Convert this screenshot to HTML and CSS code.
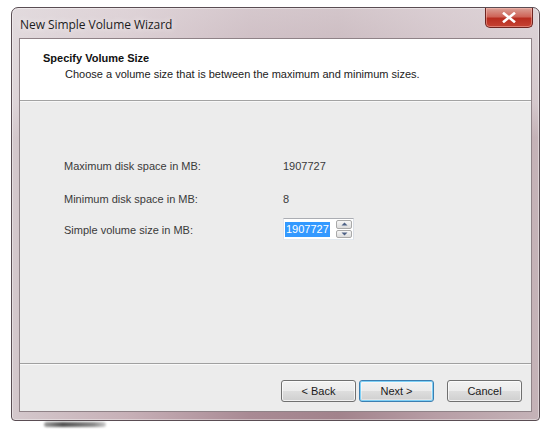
FILE: index.html
```html
<!DOCTYPE html>
<html>
<head>
<meta charset="utf-8">
<link rel="stylesheet" href="styles.css">
</head>
<body>
<div class="window">
  <div class="titlebar">
    <span class="title">New Simple Volume Wizard</span>
    <button class="close" aria-label="Close">
      <svg width="14" height="11" viewBox="0 0 14 11"><path d="M2 1.5 L12 9.5 M12 1.5 L2 9.5" stroke="#ffffff" stroke-width="2.6" stroke-linecap="square" fill="none"/></svg>
    </button>
  </div>
  <div class="client">
    <div class="header">
      <div class="h-title">Specify Volume Size</div>
      <div class="h-sub">Choose a volume size that is between the maximum and minimum sizes.</div>
    </div>
    <div class="content">
      <div class="grid">
        <div class="label">Maximum disk space in MB:</div>
        <div class="value">1907727</div>
        <div class="label">Minimum disk space in MB:</div>
        <div class="value">8</div>
        <div class="label">Simple volume size in MB:</div>
        <div class="value">
          <div class="spinner">
            <div class="spin-input"><span class="sel">1907727</span></div>
            <div class="spin-btns">
              <div class="spin-btn"><svg width="7" height="4" viewBox="0 0 7 4"><path d="M0.5 3.5 L3.5 0.5 L6.5 3.5 Z" fill="#4d6185"/></svg></div>
              <div class="spin-btn"><svg width="7" height="4" viewBox="0 0 7 4"><path d="M0.5 0.5 L3.5 3.5 L6.5 0.5 Z" fill="#4d6185"/></svg></div>
            </div>
          </div>
        </div>
      </div>
    </div>
    <div class="footer">
      <button class="btn">&lt; Back</button>
      <button class="btn default">Next &gt;</button>
      <button class="btn cancel">Cancel</button>
    </div>
  </div>
</div>
<div class="under"><div class="smudge"></div></div>
</body>
</html>
```

FILE: styles.css
```css
html, body {
  margin: 0;
  padding: 0;
  background: #ffffff;
  overflow: hidden;
}

body {
  width: 544px;
  height: 429px;
  font-family: "Liberation Sans", Arial, sans-serif;
}

.window {
  margin: 7px 0 0 11px;
  width: 529px;
  height: 414px;
  box-sizing: border-box;
  border: 1px solid #5a4d53;
  border-radius: 7px 7px 4px 4px;
  display: flex;
  flex-direction: column;
  background:
    linear-gradient(to bottom, rgba(232,226,229,0.7) 0px, rgba(232,226,229,0.45) 95px, rgba(232,226,229,0) 130px),
    linear-gradient(to right, #d4c8cc 0%, #c7b0b7 22%, #a98a94 45%, #a2838c 62%, #b79da5 80%, #c5b3b8 100%);
  box-shadow: inset 0 0 0 1px rgba(255,255,255,0.4);
}

.titlebar {
  height: 30px;
  flex: none;
  display: flex;
  align-items: flex-start;
  padding: 0 6px 0 8px;
}

.title {
  margin-top: 8px;
  font-family: "Open Sans", "Noto Sans", sans-serif;
  font-size: 12px;
  color: #1c1c1c;
  letter-spacing: -0.05px;
  text-shadow: 0 0 6px rgba(255,255,255,0.9);
}

.close {
  margin-left: auto;
  margin-top: 0;
  width: 48px;
  height: 20px;
  padding: 0;
  border: 1px solid #6e2420;
  border-top: none;
  border-radius: 0 0 5px 5px;
  background: linear-gradient(to bottom, #dba096 0%, #cf6559 45%, #b82d20 55%, #c54333 100%);
  box-shadow: inset 0 0 0 1px rgba(255,200,190,0.45);
  display: flex;
  align-items: center;
  justify-content: center;
}

.client {
  flex: 1;
  margin: 0 7px 8px 7px;
  border: 1px solid #8f8287;
  background: #ececec;
  display: flex;
  flex-direction: column;
}

.header {
  flex: none;
  background: #ffffff;
  border-bottom: 1px solid #a3a3a3;
  box-sizing: border-box;
  height: 62px;
  padding: 12px 0 0 23px;
  color: #111;
}

.h-title {
  font-size: 11px;
  font-weight: bold;
  line-height: 14px;
}

.h-sub {
  font-size: 11px;
  line-height: 14px;
  padding-left: 22px;
  margin-top: 2px;
  color: #222;
}

.content {
  flex: 1;
  border-top: 1px solid #f8f8f8;
  padding: 57px 0 0 44px;
}

.grid {
  display: grid;
  grid-template-columns: 219px auto;
  grid-template-rows: 33px 31px auto;
  font-size: 11px;
  color: #3a3a3a;
}

.grid .label,
.grid .value {
  line-height: 14px;
}

.spinner {
  display: flex;
  margin-top: -5px;
  width: 71px;
  height: 22px;
  box-sizing: border-box;
  border: 1px solid #abadb3;
  border-left-color: #e2e3ea;
  border-right-color: #dbdfe6;
  border-bottom-color: #e3e9ef;
  background: #ffffff;
}

.spin-input {
  flex: 1;
  padding: 3px 0 0 1px;
}

.sel {
  display: inline-block;
  background: #3399ff;
  color: #ffffff;
  line-height: 15px;
  padding: 0 1px;
}

.spin-btns {
  width: 16px;
  display: flex;
  flex-direction: column;
  gap: 1px;
  padding: 1px 1px 1px 0;
}

.spin-btn {
  flex: 1;
  border: 1px solid #a9a9a9;
  border-radius: 2px;
  background: linear-gradient(to bottom, #f6f6f6, #dcdcdc);
  display: flex;
  align-items: center;
  justify-content: center;
}

.footer {
  height: 48px;
  flex: none;
  box-sizing: border-box;
  border-top: 1px solid #a0a0a0;
  box-shadow: inset 0 1px 0 #f9f9f9;
  display: flex;
  align-items: flex-start;
  padding: 16px 9px 0 0;
  justify-content: flex-end;
  gap: 3px;
}

.btn {
  width: 75px;
  height: 22px;
  padding: 0;
  font-family: "Liberation Sans", Arial, sans-serif;
  font-size: 11px;
  color: #1a1a1a;
  border: 1px solid #707070;
  border-radius: 3px;
  background: linear-gradient(to bottom, #f2f2f2 0%, #ebebeb 50%, #dddddd 51%, #cfcfcf 100%);
  box-shadow: inset 0 0 0 1px rgba(255,255,255,0.7);
}

.btn.default {
  border-color: #3c7fb1;
  box-shadow: inset 0 0 0 1px #7fd0f6, inset 0 0 0 2px rgba(255,255,255,0.4);
}

.btn.cancel {
  margin-left: 10px;
}

.under {
  padding: 1px 0 0 44px;
}

.smudge {
  width: 62px;
  height: 5px;
  border-radius: 3px;
  background: linear-gradient(to right, rgba(60,60,60,0.5), rgba(40,40,40,0.8) 30%, rgba(60,60,60,0.6) 80%, rgba(90,90,90,0.3));
  filter: blur(1px);
}
```
